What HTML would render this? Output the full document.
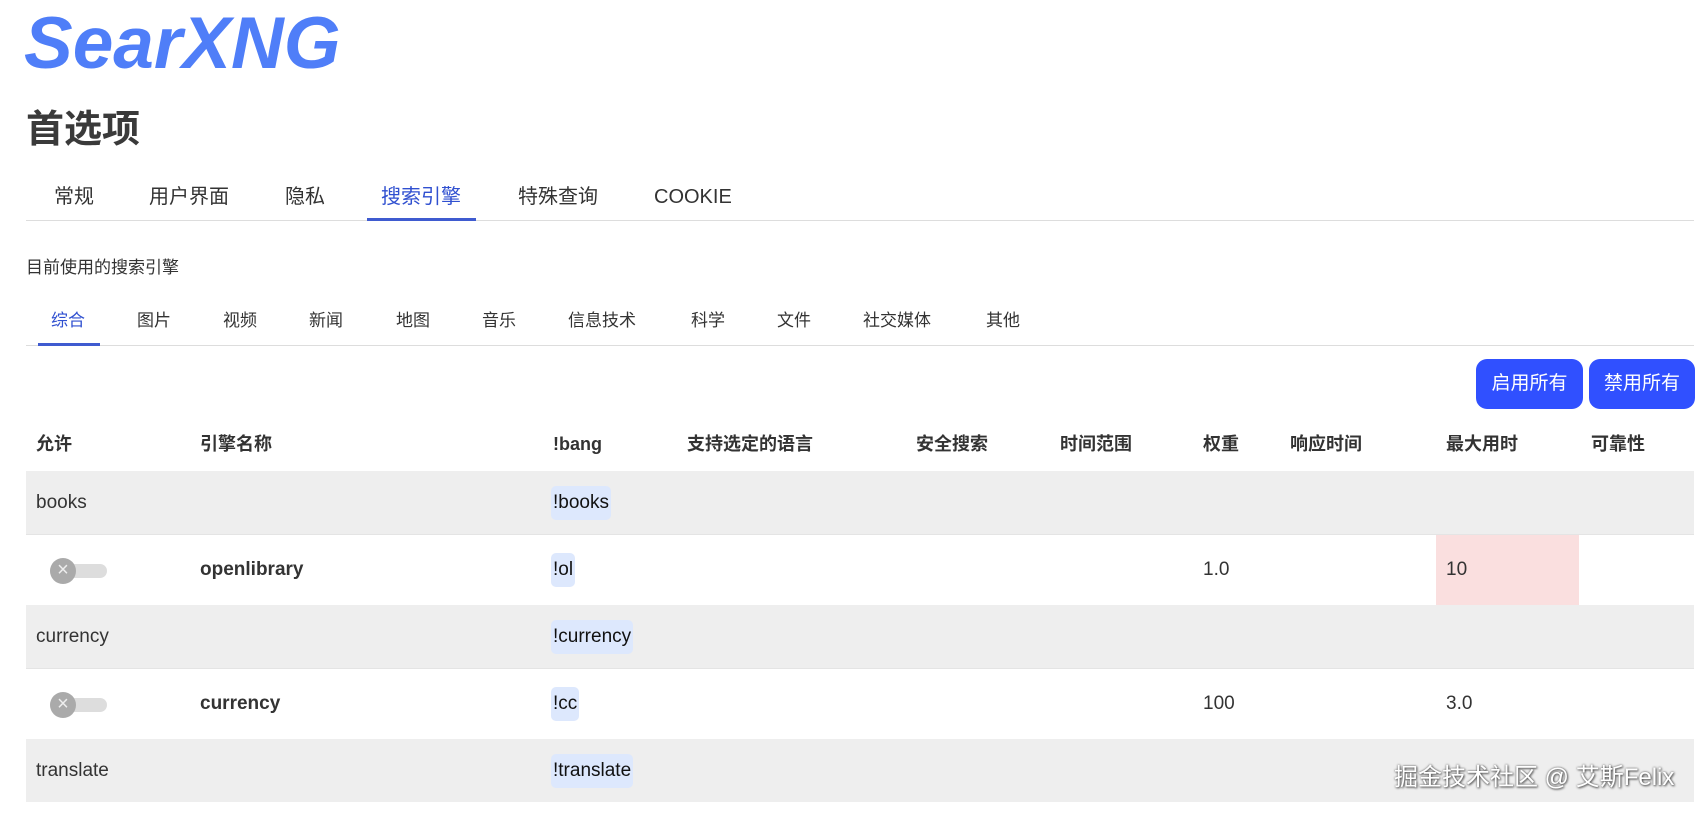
<!DOCTYPE html>
<html><head><meta charset="utf-8"><style>
*{margin:0;padding:0;box-sizing:border-box}
body{width:1706px;height:814px;overflow:hidden;background:#fff;font-family:"Liberation Sans","Noto Sans CJK SC",sans-serif;color:#444;position:relative}
.a{position:absolute;white-space:nowrap}
.logo{left:24px;top:4px;font-size:73px;line-height:80px;font-weight:bold;font-style:italic;color:#4f7ef8;letter-spacing:0px}
.h1{left:26px;top:98px;font-size:38px;font-weight:bold;color:#3a3a3a}
.tab{top:182px;font-size:20px;line-height:30px;color:#333}
.st{top:309px;font-size:17px;line-height:24px;color:#333}
.line{position:absolute;height:1px;background:#ddd}
.btn{position:absolute;top:359px;height:50px;background:#3050ff;color:#fff;border-radius:11px;font-size:19px;line-height:50px;text-align:center}
.th{top:431px;font-size:18px;line-height:26px;font-weight:bold;color:#333}
.row{position:absolute;left:26px;width:1668px}
.g{background:#eee}
.td{font-size:19px;line-height:28px;color:#333}
.bang{position:absolute;background:#dde8fd;border-radius:5px;padding:3px 2px;font-size:19px;color:#111;line-height:28px}
.tog{position:absolute;left:50px;width:57px;height:14px;background:#ddd;border-radius:7px}
.tog:before{content:"×";position:absolute;left:0;top:-6px;width:26px;height:26px;border-radius:13px;background:#aaa;color:#eee;font-size:20px;line-height:25px;text-align:center}
</style></head><body>
<div class="a logo">SearXNG</div>
<div class="a h1">首选项</div>
<div class="a tab" style="left:54px">常规</div>
<div class="a tab" style="left:149px">用户界面</div>
<div class="a tab" style="left:285px">隐私</div>
<div class="a tab" style="left:381px;color:#3050d0">搜索引擎</div>
<div class="a tab" style="left:518px">特殊查询</div>
<div class="a tab" style="left:654px">COOKIE</div>
<div class="line" style="left:26px;top:220px;width:1668px"></div>
<div class="line" style="left:367px;top:218px;width:109px;height:3px;background:#3f5bd0"></div>
<div class="a" style="left:26px;top:256px;font-size:17px;line-height:24px;color:#333">目前使用的搜索引擎</div>
<div class="a st" style="left:51px;color:#3050d0">综合</div>
<div class="a st" style="left:137px">图片</div>
<div class="a st" style="left:223px">视频</div>
<div class="a st" style="left:309px">新闻</div>
<div class="a st" style="left:396px">地图</div>
<div class="a st" style="left:482px">音乐</div>
<div class="a st" style="left:568px">信息技术</div>
<div class="a st" style="left:691px">科学</div>
<div class="a st" style="left:777px">文件</div>
<div class="a st" style="left:863px">社交媒体</div>
<div class="a st" style="left:986px">其他</div>
<div class="line" style="left:26px;top:345px;width:1668px"></div>
<div class="line" style="left:38px;top:343px;width:62px;height:3px;background:#3f5bd0"></div>
<div class="btn" style="left:1476px;width:107px">启用所有</div>
<div class="btn" style="left:1589px;width:106px">禁用所有</div>
<div class="a th" style="left:36px">允许</div>
<div class="a th" style="left:200px">引擎名称</div>
<div class="a th" style="left:553px">!bang</div>
<div class="a th" style="left:687px">支持选定的语言</div>
<div class="a th" style="left:916px">安全搜索</div>
<div class="a th" style="left:1060px">时间范围</div>
<div class="a th" style="left:1203px">权重</div>
<div class="a th" style="left:1290px">响应时间</div>
<div class="a th" style="left:1446px">最大用时</div>
<div class="a th" style="left:1591px">可靠性</div>
<div class="row g" style="top:471px;height:63px"></div>
<div class="row" style="top:534px;height:71px;border-top:1px solid #e4e4e4"></div>
<div class="row g" style="top:605px;height:63px"></div>
<div class="row" style="top:668px;height:71px;border-top:1px solid #e4e4e4"></div>
<div class="row g" style="top:739px;height:63px"></div>
<div class="a" style="left:1436px;top:535px;width:143px;height:70px;background:#fadfdf"></div>
<div class="a td" style="left:36px;top:489px">books</div>
<div class="bang" style="left:551px;top:486px">!books</div>
<div class="tog" style="left:50px;top:564px"></div>
<div class="a td" style="left:200px;top:556px;font-weight:bold">openlibrary</div>
<div class="bang" style="left:551px;top:553px">!ol</div>
<div class="a td" style="left:1203px;top:556px">1.0</div>
<div class="a td" style="left:1446px;top:556px">10</div>
<div class="a td" style="left:36px;top:623px">currency</div>
<div class="bang" style="left:551px;top:620px">!currency</div>
<div class="tog" style="left:50px;top:698px"></div>
<div class="a td" style="left:200px;top:690px;font-weight:bold">currency</div>
<div class="bang" style="left:551px;top:687px">!cc</div>
<div class="a td" style="left:1203px;top:690px">100</div>
<div class="a td" style="left:1446px;top:690px">3.0</div>
<div class="a td" style="left:36px;top:757px">translate</div>
<div class="bang" style="left:551px;top:754px">!translate</div>
<div class="a" style="left:1394px;top:762px;font-size:24px;line-height:32px;color:#fff;text-shadow:0 0 2px #555,1px 1px 2px #555">掘金技术社区 @ 艾斯Felix</div>
</body></html>
